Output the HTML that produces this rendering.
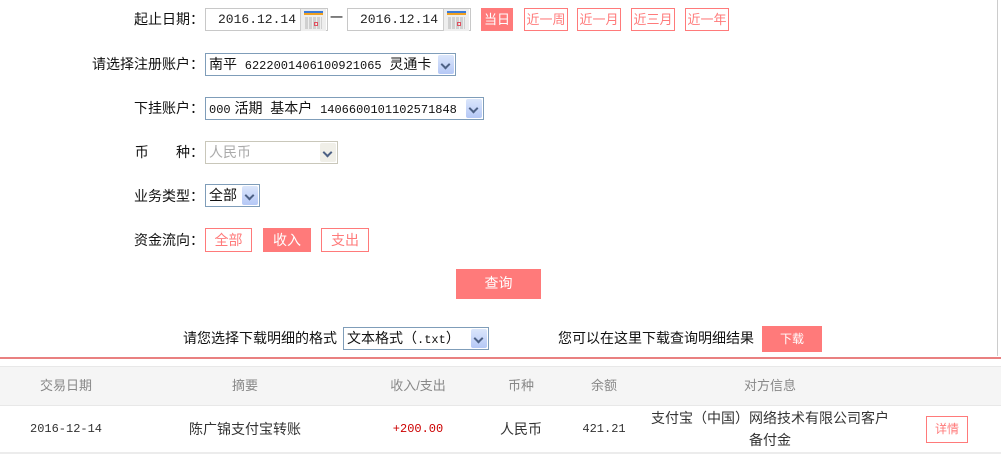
<!DOCTYPE html>
<html><head><meta charset="utf-8"><style>
*{margin:0;padding:0;box-sizing:border-box}
body{width:1001px;height:457px;background:#fff;font-family:"Liberation Sans","Noto Sans CJK SC",sans-serif;font-size:13px;color:#111;position:relative;overflow:hidden}
.a{position:absolute;white-space:nowrap}
.lbl{right:797px;text-align:right;line-height:22px;font-size:14px}
.inp{border:1px solid #c8c8c8;background:#fff;height:23px;line-height:22px;padding-left:12px;font-family:"Liberation Mono","Noto Sans CJK SC",monospace;font-size:13px;color:#222}
.cal{position:absolute;right:1px;top:0;width:26px;height:22px;background:#eee;border-left:1px solid #ccc}
.cal:before{content:"";position:absolute;left:3px;top:2px;width:19px;height:2px;background:#3a7ad8}
.cal:after{content:"";position:absolute;left:3px;top:4px;width:19px;height:2px;background:#f0a020}
.cal i{position:absolute;left:4px;top:8px;width:17px;height:12px;background:repeating-linear-gradient(90deg,#d0d0d0 0 3px,#eee 3px 4px)}
.cal b{position:absolute;left:13px;top:13px;width:4px;height:4px;border:1px solid #e05060}
.btn{border:1px solid #ff7a7a;color:#ff7a7a;text-align:center;font-size:13px;background:#fff}
.fill{background:#ff7a7a;color:#fff}
.sel{border:1px solid #7f9db9;background:#fff;height:23px;line-height:21px;padding-left:3px;font-size:14px;overflow:hidden}
.mono{font-family:"Liberation Mono","Noto Sans CJK SC",monospace;font-size:12px}
.arr{position:absolute;right:1px;top:1px;width:16px;height:19px;background:linear-gradient(#dbe6fb,#b5c8f6);border-radius:2px}
.arr:after{content:"";position:absolute;left:4px;top:6px;width:5px;height:5px;border-right:2px solid #4d6185;border-bottom:2px solid #4d6185;transform:rotate(45deg)}
.th{top:367px;line-height:38px;color:#888;font-size:13px;transform:translateX(-50%)}
.td{top:406px;line-height:47px;font-size:13px;transform:translateX(-50%);color:#333}
</style></head><body>
<div class="a" style="left:997px;top:0;width:1px;height:356px;background:#ccc"></div>

<div class="a lbl" style="top:8px">起止日期：</div>
<div class="a inp" style="left:205px;top:8px;width:123px">2016.12.14<span class="cal"><i></i><b></b></span></div>
<div class="a" style="left:330px;top:7px;line-height:22px">一</div>
<div class="a inp" style="left:347px;top:8px;width:124px">2016.12.14<span class="cal"><i></i><b></b></span></div>
<div class="a btn fill" style="left:481px;top:8px;width:32px;height:23px;line-height:22px">当日</div>
<div class="a btn" style="left:524px;top:8px;width:44px;height:23px;line-height:21px">近一周</div>
<div class="a btn" style="left:577px;top:8px;width:44px;height:23px;line-height:21px">近一月</div>
<div class="a btn" style="left:631px;top:8px;width:44px;height:23px;line-height:21px">近三月</div>
<div class="a btn" style="left:685px;top:8px;width:44px;height:23px;line-height:21px">近一年</div>

<div class="a lbl" style="top:53px">请选择注册账户：</div>
<div class="a sel" style="left:205px;top:53px;width:251px">南平&nbsp;&nbsp;<span class="mono">6222001406100921065</span>&nbsp;&nbsp;灵通卡<span class="arr"></span></div>

<div class="a lbl" style="top:97px">下挂账户：</div>
<div class="a sel" style="left:205px;top:97px;width:279px"><span class="mono">000</span> 活期&nbsp;&nbsp;基本户&nbsp;&nbsp;<span class="mono">1406600101102571848</span><span class="arr"></span></div>

<div class="a lbl" style="top:141px">币&nbsp;&nbsp;&nbsp;&nbsp;&nbsp;&nbsp;&nbsp;种：</div>
<div class="a sel" style="left:205px;top:141px;width:133px;border-color:#c9c7ba;color:#aaa">人民币<span class="arr" style="background:#f0efe8"></span></div>

<div class="a lbl" style="top:185px">业务类型：</div>
<div class="a sel" style="left:205px;top:184px;width:55px">全部<span class="arr"></span></div>

<div class="a lbl" style="top:229px">资金流向：</div>
<div class="a btn" style="left:205px;top:228px;width:47px;height:24px;line-height:22px;font-size:14px">全部</div>
<div class="a btn fill" style="left:263px;top:228px;width:48px;height:24px;line-height:22px;font-size:14px">收入</div>
<div class="a btn" style="left:321px;top:228px;width:48px;height:24px;line-height:22px;font-size:14px">支出</div>

<div class="a fill" style="left:456px;top:269px;width:85px;height:30px;line-height:29px;text-align:center;font-size:14px">查询</div>

<div class="a" style="left:183px;top:327px;line-height:22px;font-size:14px">请您选择下载明细的格式</div>
<div class="a sel" style="left:343px;top:327px;width:146px">文本格式（<span class="mono">.txt</span>）<span class="arr"></span></div>
<div class="a" style="left:558px;top:327px;line-height:22px;font-size:14px">您可以在这里下载查询明细结果</div>
<div class="a fill" style="left:762px;top:326px;width:60px;height:26px;line-height:26px;text-align:center;font-size:12px">下载</div>

<div class="a" style="left:0;top:357px;width:1001px;height:2px;background:#e98080"></div>
<div class="a" style="left:0;top:366px;width:1001px;height:40px;background:#f5f5f5;border-top:1px solid #e8e8e8;border-bottom:1px solid #e8e8e8"></div>
<div class="a" style="left:0;top:452px;width:1001px;height:2px;background:#ececec"></div>

<div class="a th" style="left:66px">交易日期</div>
<div class="a th" style="left:245px">摘要</div>
<div class="a th" style="left:418px">收入/支出</div>
<div class="a th" style="left:521px">币种</div>
<div class="a th" style="left:604px">余额</div>
<div class="a th" style="left:770px">对方信息</div>

<div class="a td" style="left:66px;font-family:'Liberation Mono',monospace;font-size:12px">2016-12-14</div>
<div class="a td" style="left:245px;font-size:14px">陈广锦支付宝转账</div>
<div class="a td" style="left:418px;color:#c00;font-family:'Liberation Mono',monospace;font-size:12px">+200.00</div>
<div class="a td" style="left:521px;font-size:14px">人民币</div>
<div class="a td" style="left:604px;font-family:'Liberation Mono',monospace;font-size:12px">421.21</div>
<div class="a" style="left:770px;top:406px;transform:translateX(-50%);text-align:center;line-height:22px;font-size:14px;padding-top:1px;color:#333">支付宝（中国）网络技术有限公司客户<br>备付金</div>
<div class="a btn" style="left:926px;top:416px;width:42px;height:27px;line-height:25px;font-size:12px">详情</div>
</body></html>
